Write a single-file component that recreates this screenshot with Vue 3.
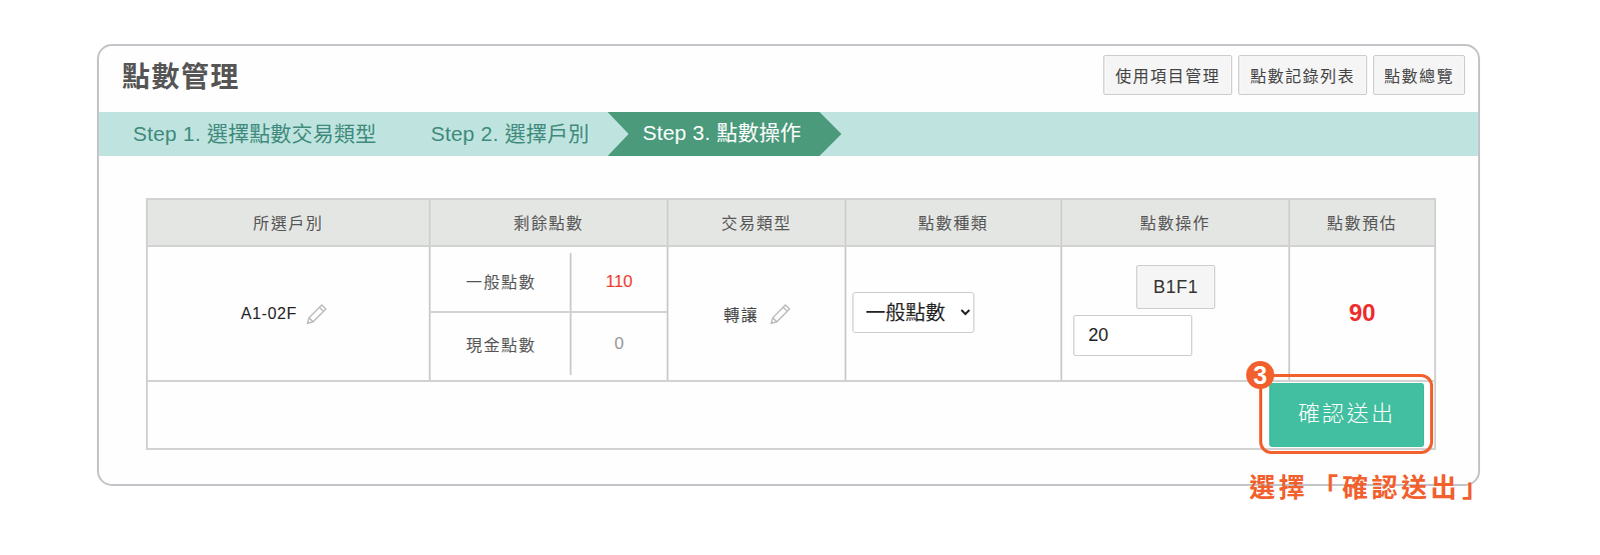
<template>
  <div class="page">
    <div class="card">
      <!-- 標題 -->
      <header class="head">
        <h1 class="title">點數管理</h1>
        <div class="head-btns">
          <button v-for="b in headButtons" :key="b" class="btn">{{ b }}</button>
        </div>
      </header>

      <!-- 步驟 -->
      <div class="steps">
        <span class="step step1">Step 1. 選擇點數交易類型</span>
        <span class="step step2">Step 2. 選擇戶別</span>
        <span class="step active">Step 3. 點數操作</span>
      </div>

      <div class="body">
        <table class="grid">
          <colgroup>
            <col style="width: 283px" />
            <col style="width: 238px" />
            <col style="width: 178px" />
            <col style="width: 216px" />
            <col style="width: 228px" />
            <col style="width: 146px" />
          </colgroup>
          <thead>
            <tr>
              <th v-for="h in headers" :key="h">{{ h }}</th>
            </tr>
          </thead>
          <tbody>
            <tr class="main-row">
              <td class="unit-cell">
                <span class="edit-wrap">A1-02F
                  <svg class="pencil" viewBox="0 0 20 20"><path d="M14.5 1.8l3.7 3.7L6.6 17.1 1.6 18.4l1.3-5z M12.4 3.9l3.7 3.7 M2.9 13.4l3.7 3.7" /></svg>
                </span>
              </td>
              <td class="points-cell">
                <div class="points">
                  <div class="p-name">一般點數</div>
                  <div class="p-val red">110</div>
                  <div class="p-name">現金點數</div>
                  <div class="p-val gray">0</div>
                </div>
              </td>
              <td>
                <span class="edit-wrap trade">轉讓
                  <svg class="pencil" viewBox="0 0 20 20"><path d="M14.5 1.8l3.7 3.7L6.6 17.1 1.6 18.4l1.3-5z M12.4 3.9l3.7 3.7 M2.9 13.4l3.7 3.7" /></svg>
                </span>
              </td>
              <td class="select-cell">
                <select class="kind">
                  <option>一般點數</option>
                  <option>現金點數</option>
                </select>
              </td>
              <td class="op-cell">
                <button class="btn b1f1">B1F1</button>
                <input class="amount" type="text" value="20" />
              </td>
              <td class="estimate">90</td>
            </tr>
            <tr class="foot-row">
              <td colspan="6">
                <button class="submit">確認送出</button>
              </td>
            </tr>
          </tbody>
        </table>

        <!-- 教學標註 -->
        <div class="callout">
          <span class="badge">3</span>
        </div>
        <div class="callout-text">選擇<span class="bk open">「</span>確認送出<span class="bk close">」</span></div>
      </div>
    </div>
  </div>
</template>

<script setup>
const headButtons = ['使用項目管理', '點數記錄列表', '點數總覽']
const headers = ['所選戶別', '剩餘點數', '交易類型', '點數種類', '點數操作', '點數預估']
</script>

<style>
body {
  margin: 0;
  background: #fff;
}
</style>

<style scoped>
* {
  box-sizing: border-box;
}

.page {
  padding: 44px 0 0 97px;
  height: 555px;
  overflow: hidden;
  font-family: "Liberation Sans", "Noto Sans CJK TC", sans-serif;
  color: #333;
}

.card {
  width: 1384px;
  height: 442px;
  background: #fefefe;
  border: 2px solid #c4c4c8;
  border-radius: 15px;
}

/* 標題 */
.head {
  height: 66px;
  display: flex;
  align-items: center;
  justify-content: space-between;
  padding: 0 13px 8px 23px;
}

.title {
  margin: 0;
  font-size: 28px;
  font-weight: 700;
  letter-spacing: 1.5px;
  color: #555;
}

.head-btns {
  display: flex;
  gap: 6px;
}

.btn {
  height: 40px;
  padding: 0 11px;
  background: #f5f5f5;
  border: 1px solid #ccc;
  border-radius: 2px;
  font-family: inherit;
  font-size: 16px;
  letter-spacing: 1.5px;
  color: #444;
}

.head-btns .btn:last-child {
  padding: 0 10px;
}

/* 步驟 */
.steps {
  height: 44px;
  background: #bfe4df;
  display: flex;
  align-items: center;
  font-size: 21px;
  letter-spacing: 0.2px;
  color: #3f8a7c;
}

.step1 {
  margin-left: 34px;
  width: 298px;
  padding-bottom: 4px;
}

.step2 {
  width: 177px;
  padding-bottom: 4px;
}

.step {
  white-space: nowrap;
}

.active {
  height: 44px;
  width: 234px;
  line-height: 42px;
  padding-left: 35px;
  background: #4b9a7c;
  color: #fff;
  clip-path: polygon(0 0, 212px 0, 100% 50%, 212px 100%, 0 100%, 21px 50%);
}

/* 表格 */
.body {
  position: relative;
  padding: 42px 0 0 47px;
}

.grid {
  width: 1289px;
  table-layout: fixed;
  border-collapse: collapse;
  font-size: 16px;
  letter-spacing: 1.6px;
  text-align: center;
}

.grid th,
.grid td {
  border: 2px solid #d2d2d2;
  padding: 0;
  vertical-align: middle;
}

.grid th {
  height: 47px;
  padding-bottom: 2px;
  background: #e4e6e3;
  font-weight: 400;
  color: #555;
}

.main-row td {
  height: 134px;
}

.grid .unit-cell {
  padding-right: 8px;
}

.edit-wrap {
  display: inline-flex;
  align-items: center;
  gap: 9px;
  letter-spacing: 0.6px;
  color: #222;
}

.edit-wrap.trade {
  letter-spacing: 1.6px;
  color: #444;
  gap: 11px;
  padding-left: 2px;
}

.pencil {
  width: 22px;
  height: 22px;
  fill: none;
  stroke: #b8b8b8;
  stroke-width: 1.2;
}

.points {
  height: 133px;
  display: grid;
  grid-template-columns: 141px 1fr;
  grid-template-rows: 66px 67px;
}

.p-name,
.p-val {
  display: flex;
  align-items: center;
  justify-content: center;
}

.p-name {
  color: #555;
  position: relative;
}

.p-name::after {
  content: "";
  position: absolute;
  right: 0;
  width: 2px;
  background: #d2d2d2;
}

.p-name:nth-child(1),
.p-val:nth-child(2) {
  border-bottom: 2px solid #d2d2d2;
  padding-top: 4px;
}

.p-val:nth-child(2) {
  padding-top: 5px;
}

.p-name:nth-child(1)::after {
  top: 6px;
  bottom: -2px;
}

.p-name:nth-child(3),
.p-val:nth-child(4) {
  padding-bottom: 5px;
}

.p-name:nth-child(3)::after {
  top: 0;
  bottom: 5px;
}

.p-val {
  font-size: 17px;
  letter-spacing: 0;
}

.red {
  color: #ee3a2e;
}

.gray {
  color: #999;
}

.select-cell {
  text-align: left;
}

.grid .select-cell {
  padding-left: 6px;
}

.kind {
  display: block;
  width: 122px;
  height: 41px;
  margin-top: -2px;
  padding: 0 0 0 8px;
  background: #fff;
  border: 1px solid #ccc;
  border-radius: 3px;
  font-family: inherit;
  font-size: 20px;
  color: #222;
}

.op-cell {
  text-align: left;
}

.grid .op-cell {
  padding-bottom: 6px;
}

.b1f1 {
  display: block;
  width: 79px;
  height: 44px;
  margin: 0 0 6px 74px;
  padding: 0;
  font-size: 18px;
  letter-spacing: 0.5px;
  color: #333;
}

.amount {
  display: block;
  width: 119px;
  height: 41px;
  margin-left: 11px;
  padding: 0 14px;
  border: 1px solid #ccc;
  border-radius: 2px;
  background: #fff;
  font-family: inherit;
  font-size: 18px;
  color: #222;
}

.grid .estimate {
  padding-bottom: 2px;
  font-size: 24px;
  font-weight: 700;
  letter-spacing: 0;
  color: #ee2d2d;
}

.grid .foot-row td {
  height: 68px;
  text-align: right;
  vertical-align: top;
  padding: 1px 10px 0 0;
  line-height: 0;
}

.submit {
  display: inline-block;
  vertical-align: top;
  width: 155px;
  height: 64px;
  padding: 0 0 1px;
  background: #42bea0;
  border: none;
  border-radius: 3px;
  font-family: inherit;
  font-size: 22px;
  line-height: 1.2;
  letter-spacing: 2.4px;
  font-weight: 300;
  color: #fff;
}

/* 標註 */
.callout {
  position: absolute;
  left: 1161px;
  top: 218px;
  width: 174px;
  height: 80px;
  border: 3px solid #f2602d;
  border-radius: 12px;
}

.badge {
  position: absolute;
  left: -16px;
  top: -16px;
  width: 28px;
  height: 28px;
  border-radius: 50%;
  background: #f2602d;
  color: #fff;
  font-size: 25px;
  font-weight: 700;
  line-height: 28px;
  text-align: center;
}

.callout-text {
  position: absolute;
  left: 1151px;
  top: 317px;
  font-size: 26px;
  font-weight: 700;
  letter-spacing: 3.5px;
  line-height: 30px;
  white-space: nowrap;
  color: #f2602d;
}

.bk {
  display: inline-block;
  text-align: center;
  letter-spacing: 0;
}

.open {
  width: 34px;
}

.close {
  width: 30px;
}
</style>
